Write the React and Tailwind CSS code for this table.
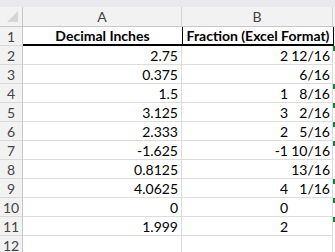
import React from 'react';

const rows = [
  { n: 2, dec: '2.75', int: '2', frac: '12/16', mark: true },
  { n: 3, dec: '0.375', int: '', frac: '6/16', mark: false },
  { n: 4, dec: '1.5', int: '1', frac: '8/16', mark: true },
  { n: 5, dec: '3.125', int: '3', frac: '2/16', mark: true },
  { n: 6, dec: '2.333', int: '2', frac: '5/16', mark: true },
  { n: 7, dec: '-1.625', int: '-1', frac: '10/16', mark: true },
  { n: 8, dec: '0.8125', int: '', frac: '13/16', mark: false },
  { n: 9, dec: '4.0625', int: '4', frac: '1/16', mark: true },
  { n: 10, dec: '0', int: '0', frac: '', mark: true },
  { n: 11, dec: '1.999', int: '2', frac: '', mark: true },
];

const font = { fontFamily: 'Lato, "Open Sans", sans-serif' };

const RowNum = ({ children }) => (
  <div className="w-[23px] shrink-0 bg-[#f2f2f2] border-r border-[#c8c8c8] border-b border-b-[#d9d9d9] flex items-center justify-center text-[14px] text-[#444]">
    {children}
  </div>
);

const App = () => {
  return (
    <div className="w-[335px] h-[252px] overflow-hidden bg-white text-[14px] text-black" style={font}>
      {/* top strip */}
      <div className="h-[7px] bg-[#e9e8ee]" />

      {/* column letters */}
      <div className="flex h-[20px] bg-[#f2f2f2] border-b border-[#c8c8c8]">
        <div className="w-[23px] shrink-0 border-r border-[#c8c8c8] relative">
          <div className="absolute right-[4px] bottom-[4px] w-0 h-0 border-l-[11px] border-l-transparent border-b-[11px] border-b-[#d6d6d6]" />
        </div>
        <div className="w-[159px] shrink-0 border-r border-[#d4d4d4] flex items-center justify-center text-[#444]">A</div>
        <div className="w-[151px] shrink-0 border-r border-[#d4d4d4] flex items-center justify-center text-[#444]">B</div>
      </div>

      {/* row 1 */}
      <div className="flex h-[19px]">
        <RowNum>1</RowNum>
        <div className="w-[159px] shrink-0 border-b-2 border-black flex items-center justify-center font-bold">
          Decimal Inches
        </div>
        <div className="w-[152px] shrink-0 border-b-2 border-x border-black flex items-center justify-center font-bold">
          Fraction (Excel Format)
        </div>
      </div>

      {rows.map((r) => (
        <div key={r.n} className="flex h-[19px]">
          <RowNum>{r.n}</RowNum>
          <div className="w-[159px] shrink-0 border-r border-b border-[#dcdcdc] flex items-center justify-end pr-[3px]">
            {r.dec}
          </div>
          <div className="w-[151px] shrink-0 border-r border-b border-[#dcdcdc] flex items-center justify-end pr-[2px]">
            <span className="shrink-0">{r.int}</span>
            <span className="block w-[42px] min-w-[42px] shrink-0 text-right">{r.frac}</span>
          </div>
          <div className="relative w-[2px]">
            {r.mark && <div className="absolute left-0 top-0 w-[2px] h-[5px] bg-[#1e7b3c]" />}
          </div>
        </div>
      ))}

      {/* row 12 */}
      <div className="flex h-[19px]">
        <RowNum>12</RowNum>
        <div className="w-[159px] shrink-0 border-r border-b border-[#dcdcdc]" />
        <div className="w-[151px] shrink-0 border-r border-b border-[#dcdcdc]" />
      </div>
    </div>
  );
};

export default App;
